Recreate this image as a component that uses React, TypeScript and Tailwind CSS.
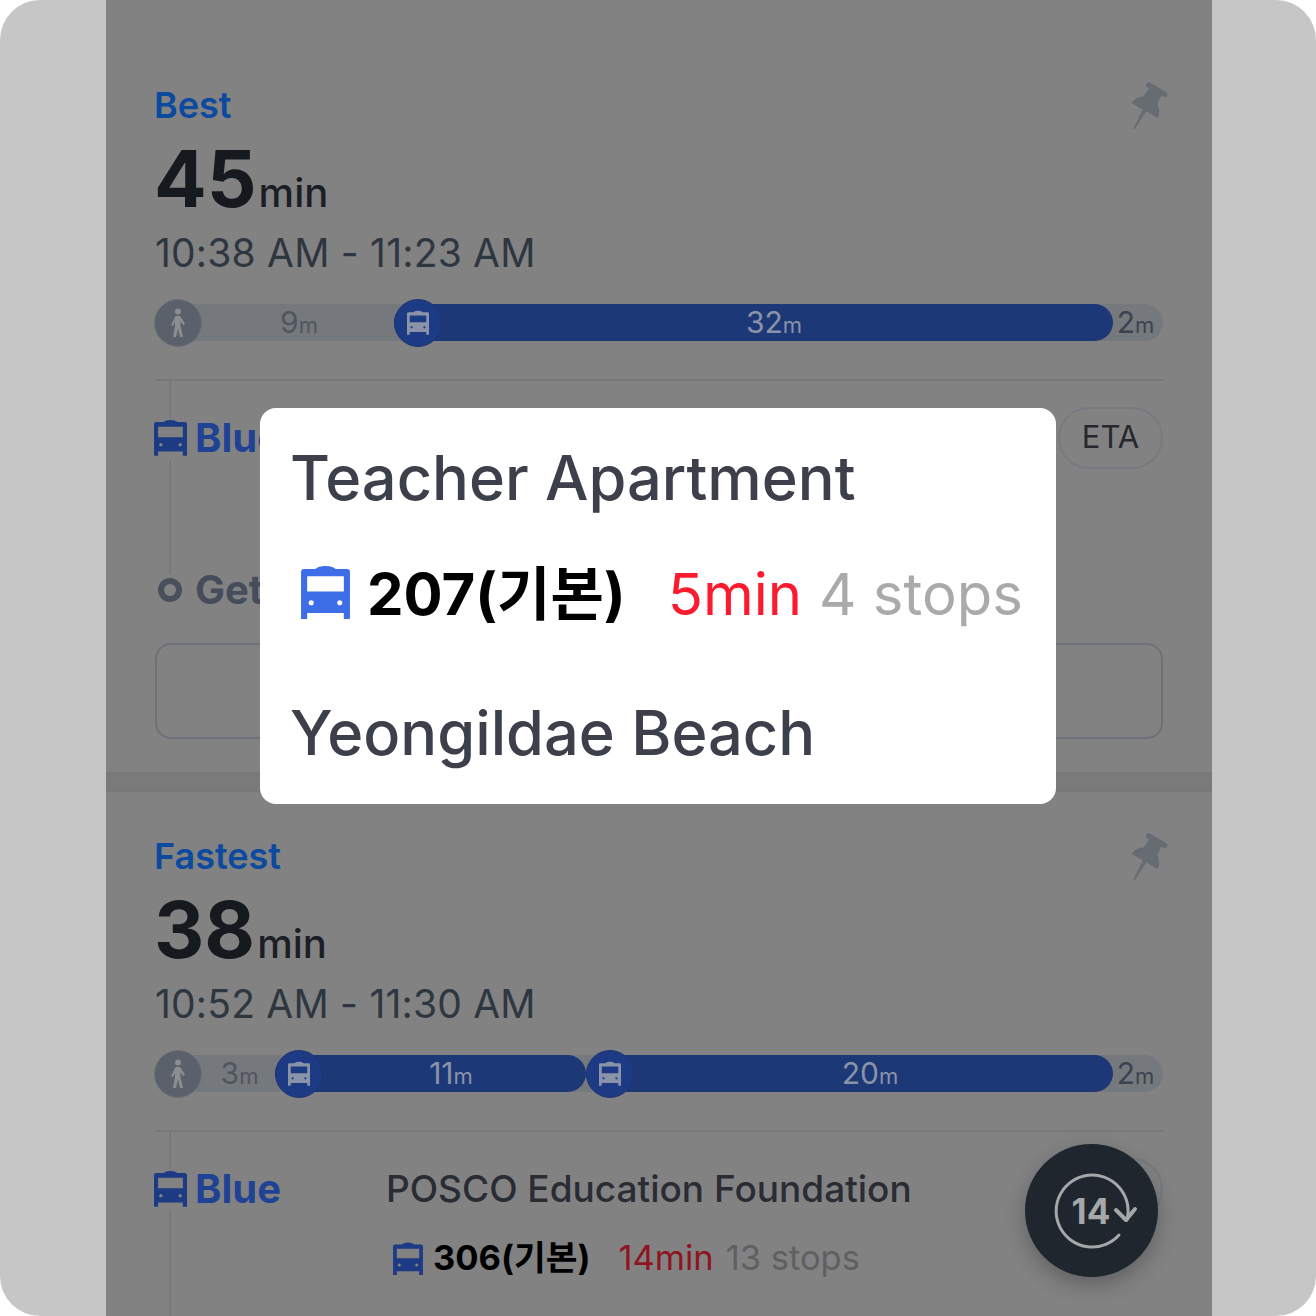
import React from 'react'

const BUS_PATH =
  'M3 4H14Q17 1 24 1Q31 1 34 4H45Q48 4 48 7V53H42V47H6V53H0V7Q0 4 3 4ZM6 11V26H42V11ZM10 34.5A2.5 2.5 0 1 0 10 39.5A2.5 2.5 0 1 0 10 34.5ZM38 34.5A2.5 2.5 0 1 0 38 39.5A2.5 2.5 0 1 0 38 34.5Z'

function BusIcon({ className }: { className: string }) {
  return (
    <svg viewBox="0 0 48 53" className={className} fill="currentColor" fillRule="evenodd">
      <path d={BUS_PATH} />
    </svg>
  )
}

function WalkIcon() {
  return (
    <svg viewBox="0 0 20 30" className="w-[20px] h-[30px] text-[#8b8d90]" fill="currentColor">
      <circle cx="10" cy="3.5" r="3" />
      <path d="M7.5 8H12L17 15.5L15.5 17L12.5 13.5V18L15 29H12L10 20.5L8 29H5L7 18V14L5 18L3 17Z" />
    </svg>
  )
}

function PinIcon() {
  return (
    <svg viewBox="-15 -26 37 47" className="w-[37px] h-[47px] shrink-0 mr-[-5px] mt-[-2px] text-[#676c73]" fill="currentColor">
      <g transform="rotate(30) translate(-19 -24)">
        <path d="M10 0H28Q31 0 31 2.5Q31 5.5 28 5.5H26L27 15Q34 20 34 27H4Q4 20 11 15L12 5.5H10Q7 5.5 7 2.5Q7 0 10 0Z" />
        <path d="M17 27H21L19.8 48H18.2Z" />
      </g>
    </svg>
  )
}

function Minutes({ value, className }: { value: string; className: string }) {
  return (
    <span className={`text-[30px] leading-none ${className}`}>
      {value}
      <span className="text-[22px]">m</span>
    </span>
  )
}

interface Segment {
  minutes: string
  width: string
}

function WalkSegment({ minutes, width }: Segment) {
  return (
    <div className={`flex items-center h-full ${width}`}>
      <div className="w-[48px] h-[48px] shrink-0 rounded-full bg-[#5b616b] border border-[#6d7076] flex items-center justify-center">
        <WalkIcon />
      </div>
      <div className="flex-1 pl-[2px] text-center">
        <Minutes value={minutes} className="text-[#50555e]" />
      </div>
    </div>
  )
}

function BusSegment({ minutes, width }: Segment) {
  return (
    <div className={`flex items-center h-full bg-[#1d3877] rounded-full ${width}`}>
      <div className="w-[48px] h-[48px] shrink-0 rounded-full bg-[#1d3a85] border border-[#1f3572] flex items-center justify-center">
        <BusIcon className="w-[22px] h-[25px] text-[#8a93a8]" />
      </div>
      <div className="flex-1 pr-[7px] text-center">
        <Minutes value={minutes} className="text-[#8a93a8]" />
      </div>
    </div>
  )
}

interface Leg {
  stop: string
  bus: string
  wait: string
  stops: string
}

interface Route {
  label: string
  total: string
  span: string
  walk: Segment
  buses: Segment[]
  leg?: Leg
}

const routes: Route[] = [
  {
    label: 'Best',
    total: '45',
    span: '10:38 AM - 11:23 AM',
    walk: { minutes: '9', width: 'w-[240px]' },
    buses: [{ minutes: '32', width: 'w-[719px]' }],
  },
  {
    label: 'Fastest',
    total: '38',
    span: '10:52 AM - 11:30 AM',
    walk: { minutes: '3', width: 'w-[121px]' },
    buses: [
      { minutes: '11', width: 'w-[311px]' },
      { minutes: '20', width: 'w-[527px]' },
    ],
    leg: {
      stop: 'POSCO Education Foundation',
      bus: '306(기본)',
      wait: '14min',
      stops: '13 stops',
    },
  },
]

function RouteCard({ route, first }: { route: Route; first: boolean }) {
  const { leg } = route
  return (
    <section className={`pl-[48px] pr-[49px] ${first ? 'pt-[84px] h-[772px]' : 'pt-[43px]'}`}>
      <div className="flex justify-between items-start h-[42px]">
        <div className="text-[36px] leading-[42px] font-semibold text-[#0b4a9f]">{route.label}</div>
        <PinIcon />
      </div>
      <div className="flex items-baseline h-[78px] mt-[14px]">
        <span className="text-[78px] leading-[78px] font-bold text-[#16191e]">{route.total}</span>
        <span className="text-[40px] leading-none font-medium text-[#1b1e24] ml-[2px]">min</span>
      </div>
      <div className="text-[39px] leading-[46px] tracking-[0.2px] ml-px mt-[12px] text-[#2e3640]">{route.span}</div>

      <div className="flex items-center h-[37px] mt-[28px] rounded-full bg-[#75787d]">
        <WalkSegment {...route.walk} />
        {route.buses.map((bus) => (
          <BusSegment key={bus.minutes} {...bus} />
        ))}
        <div className="flex-1 pr-[5px] text-center">
          <Minutes value="2" className="text-[#3b4350]" />
        </div>
      </div>

      <div className="h-[2px] ml-px bg-[#77787c] mt-[38px]" />
      <div className="w-[2px] h-[38px] ml-[15px] bg-[#77787c]" />

      <div className="flex items-center h-[37px]">
        <BusIcon className="w-[33px] h-[37px] shrink-0 text-[#1d3a85]" />
        <span className="w-[191px] shrink-0 ml-[8px] text-[40px] leading-none font-bold text-[#1f4295]">Blue</span>
        <div className="flex-1 text-[37px] leading-[37px] font-medium text-[#2a2c33]">{leg?.stop}</div>
        <div className="w-[105px] h-[62px] shrink-0 rounded-full border-2 border-[#777a80] flex items-center justify-center text-[31px] text-[#26282d]">
          {first && 'ETA'}
        </div>
      </div>

      <div className="flex">
        <div className="w-[2px] h-[114px] ml-[15px] mt-[4px] bg-[#77787c]" />
        {leg && (
          <div className="flex items-center h-[36px] ml-[222px] mt-[33px] gap-[10px]">
            <BusIcon className="w-[30px] h-[33px] text-[#1d3a85]" />
            <span className="text-[34.5px] font-bold text-black">{leg.bus}</span>
            <span className="text-[34.5px] ml-[18px] text-[#8e1420]">{leg.wait}</span>
            <span className="text-[34.5px] ml-[2px] text-[#5f6062]">{leg.stops}</span>
          </div>
        )}
      </div>

      {first && (
        <>
          <div className="flex items-center h-[24px] mt-[4px]">
            <div className="w-[24px] h-[24px] ml-[4px] rounded-full border-[6px] border-[#4a505b]" />
            <span className="ml-[13px] text-[40px] leading-none font-bold text-[#454c5a]">Get off</span>
          </div>
          <div className="h-[96px] ml-px mt-[41px] rounded-[16px] border-2 border-[#6d7278]" />
        </>
      )}
    </section>
  )
}

function Popup() {
  return (
    <div className="absolute left-[260px] top-[408px] w-[796px] h-[396px] rounded-[16px] bg-white pl-[30px] pt-[37px]">
      <div className="text-[61.3px] leading-[66px] font-medium text-[#3d404a]">Teacher Apartment</div>
      <div className="flex items-center h-[62px] mt-[52px] ml-[11px]">
        <BusIcon className="w-[49px] h-[54px] -mt-[4px] text-[#3d6ee8]" />
        <span className="ml-[17px] text-[58px] leading-none font-bold text-black">207(기본)</span>
        <span className="ml-[42px] text-[58px] leading-none text-[#fb1a2e]">5min</span>
        <span className="ml-[17px] text-[58px] leading-none text-[#aaaaaa]">4 stops</span>
      </div>
      <div className="text-[61.3px] leading-[66px] mt-[75px] font-medium text-[#3d404a]">Yeongildae Beach</div>
    </div>
  )
}

function RewindButton() {
  return (
    <button className="absolute left-[1025px] top-[1144px] w-[133px] h-[133px] rounded-full bg-[#1f262d] shadow-[0_8px_20px_rgba(0,0,0,0.25)] flex items-center justify-center">
      <svg viewBox="0 0 133 133" className="absolute inset-0 w-full h-full text-[#a5a7a9]" fill="none" stroke="currentColor" strokeLinecap="round" strokeLinejoin="round">
        <path strokeWidth="3" d="M94 91A36 36 0 1 1 102 76" />
        <path strokeWidth="4" d="M91 66L101 76L110 65" />
      </svg>
      <span className="text-[35px] leading-none font-bold text-[#a5a7a9] mt-[2px] -ml-[1px]">14</span>
    </button>
  )
}

export default function App() {
  return (
    <div className="w-[1316px] h-[1316px] bg-white font-[Inter,'Noto_Sans_CJK_KR',sans-serif]">
      <div className="relative w-full h-full rounded-[40px] overflow-hidden bg-[#c6c6c6]">
        <div className="w-[1106px] h-full ml-[106px] overflow-hidden bg-[#828282]">
          <RouteCard route={routes[0]} first />
          <div className="h-[20px] bg-[#7a7a7a] border-y border-[#777777]" />
          <RouteCard route={routes[1]} first={false} />
        </div>
        <Popup />
        <RewindButton />
      </div>
    </div>
  )
}
